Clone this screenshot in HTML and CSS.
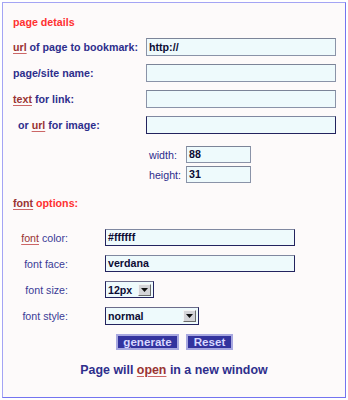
FILE: index.html
```html
<!DOCTYPE html>
<html>
<head>
<meta charset="utf-8">
<link rel="stylesheet" href="styles.css">
</head>
<body>
<div class="panel">
  <div class="title">page details</div>
  <div class="fields">
    <label class="lbl"><span class="u">url</span> of page to bookmark:</label>
    <div class="input">http://</div>
    <label class="lbl">page/site name:</label>
    <div class="input"></div>
    <label class="lbl"><span class="u">text</span> for link:</label>
    <div class="input"></div>
    <label class="lbl indent">or <span class="u">url</span> for image:</label>
    <div class="input dark"></div>
  </div>
  <div class="dims">
    <label class="dlbl">width:</label>
    <div class="input small">88</div>
    <label class="dlbl">height:</label>
    <div class="input small">31</div>
  </div>
  <div class="title sub"><span class="u">font</span> options:</div>
  <div class="fonts">
    <label class="flbl"><span class="u">font</span> color:</label>
    <div class="input dark wide">#ffffff</div>
    <label class="flbl">font face:</label>
    <div class="input dark wide">verdana</div>
    <label class="flbl">font size:</label>
    <div class="select size"><span class="val">12px</span><span class="btn"><svg width="7" height="4" viewBox="0 0 7 4"><path d="M0 0H7L3.5 4Z" fill="#111"/></svg></span></div>
    <label class="flbl">font style:</label>
    <div class="select style"><span class="val">normal</span><span class="btn"><svg width="7" height="4" viewBox="0 0 7 4"><path d="M0 0H7L3.5 4Z" fill="#111"/></svg></span></div>
  </div>
  <div class="buttons">
    <button class="b gen"><span class="ak">g</span>enerate</button>
    <button class="b reset">Reset</button>
  </div>
  <div class="note">Page will <span class="u">open</span> in a new window</div>
</div>
</body>
</html>
```
FILE: styles.css
```css
html, body {
  margin: 0;
  padding: 0;
  background: #ffffff;
}
body {
  font-family: "Liberation Sans", Arial, sans-serif;
  font-size: 10.67px;
}
.panel {
  box-sizing: border-box;
  margin: 2px 0 0 2px;
  width: 344px;
  height: 396px;
  border: 1px solid #a4a4f4;
  border-right-color: #7474f0;
  border-bottom-color: #7474f0;
  background: #fdfafa;
  padding: 12px 0 0 10px;
}
.title {
  color: #ff3030;
  font-weight: bold;
  line-height: 14px;
}
.title.sub {
  margin-top: 13px;
}
.u {
  color: #993333;
  text-decoration: underline;
  text-decoration-color: #cc6666;
  text-underline-offset: 2px;
}
.fields {
  margin-top: 9px;
  display: grid;
  grid-template-columns: 133px 190px;
  row-gap: 8px;
  align-items: center;
}
.lbl {
  color: #2e2e8c;
  font-weight: bold;
}
.indent {
  padding-left: 5px;
}
.input {
  box-sizing: border-box;
  height: 18px;
  border: 1px solid #8a93a8;
  border-top-color: #7c8498;
  background: #eefafc;
  color: #0c0c34;
  font-weight: bold;
  line-height: 16px;
  padding-left: 2px;
}
.input.dark {
  border-color: #8088a0 #23235e #23235e #23235e;
}
.dims {
  margin: 12px 0 0 136px;
  display: grid;
  grid-template-columns: 37px 65px;
  row-gap: 3px;
  align-items: center;
}
.dlbl {
  color: #2e2e8c;
}
.input.small {
  height: 17px;
  line-height: 15px;
}
.fonts {
  margin-top: 19px;
  display: grid;
  grid-template-columns: 55px auto;
  column-gap: 37px;
  row-gap: 9px;
  align-items: center;
  justify-items: start;
}
.flbl {
  color: #3a3a96;
  justify-self: end;
}
.input.wide {
  width: 190px;
  height: 17px;
  line-height: 15px;
}
.select {
  box-sizing: border-box;
  display: flex;
  align-items: center;
  justify-content: space-between;
  height: 17px;
  border: 1px solid #23235e;
  border-top-color: #6c6c8a;
  background: #eefafc;
  color: #0c0c34;
  font-weight: bold;
  padding: 0 2px 0 2px;
}
.select.size { width: 49px; }
.select.style { width: 94px; height: 18px; }
.btn {
  box-sizing: border-box;
  width: 13px;
  height: 12px;
  background: #d4d4d8;
  border: 1px solid #f4f4f4;
  border-right-color: #6a6a6a;
  border-bottom-color: #6a6a6a;
  display: flex;
  align-items: center;
  justify-content: center;
}
.buttons {
  margin: 9px 0 0 103px;
  display: flex;
  gap: 7px;
}
.b {
  box-sizing: border-box;
  height: 16px;
  padding: 0;
  margin: 0;
  background: #33339e;
  border: 2px solid #a8a8e0;
  color: #d8d8ff;
  font-family: "Liberation Sans", Arial, sans-serif;
  font-size: 11.6px;
  font-weight: bold;
  line-height: 12px;
}
.gen { width: 63px; }
.reset { width: 47px; }
.ak {
  text-decoration: underline;
}
.note {
  margin: 12px 0 0 -10px;
  text-align: center;
  width: 342px;
  color: #2e2e8c;
  font-weight: bold;
  font-size: 12.4px;
  line-height: 16px;
}
```
